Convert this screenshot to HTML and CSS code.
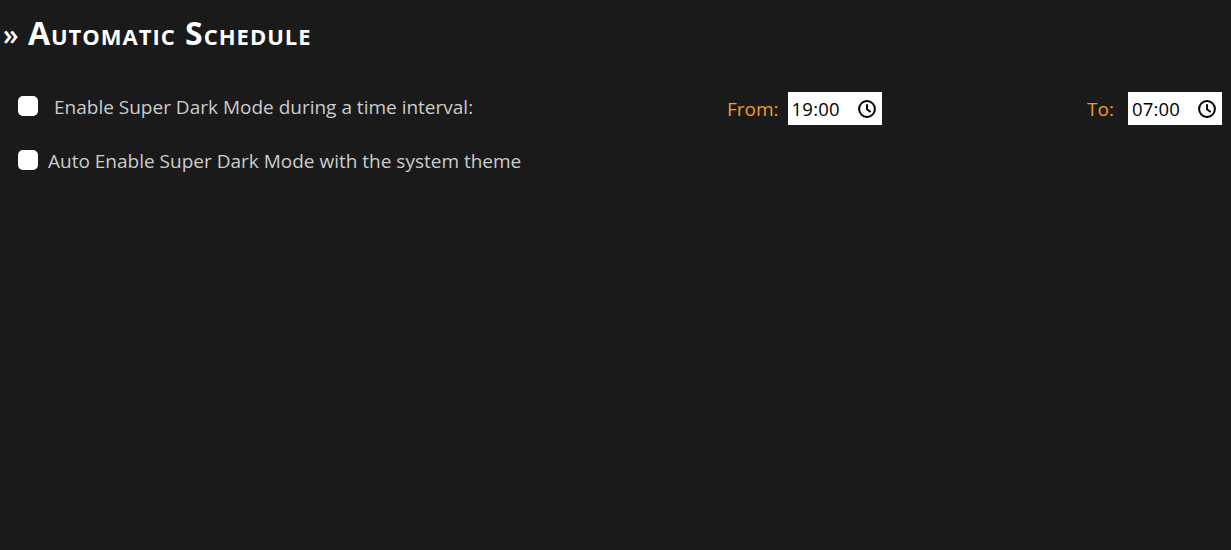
FILE: index.html
```html
<!DOCTYPE html>
<html lang="en">
<head>
    <meta charset="UTF-8">
    <title>Automatic Schedule</title>
    <link rel="stylesheet" href="styles.css">
</head>
<body>
    <h2 class="title"><span class="arrow">»</span> Automatic Schedule</h2>

    <div class="option schedule">
        <label class="check first">
            <input type="checkbox">
            <span>Enable Super Dark Mode during a time interval:</span>
        </label>
        <div class="time from">
            <label for="from">From:</label>
            <div class="time-box">
                <input type="text" id="from" value="19:00">
                <svg class="clock" viewBox="0 0 18 18"><circle cx="9" cy="9" r="7.9"/><path d="M9 4.2V9.2L12.6 12"/></svg>
            </div>
        </div>
        <div class="time to">
            <label for="to">To:</label>
            <div class="time-box">
                <input type="text" id="to" value="07:00">
                <svg class="clock" viewBox="0 0 18 18"><circle cx="9" cy="9" r="7.9"/><path d="M9 4.2V9.2L12.6 12"/></svg>
            </div>
        </div>
    </div>

    <div class="option">
        <label class="check">
            <input type="checkbox">
            <span>Auto Enable Super Dark Mode with the system theme</span>
        </label>
    </div>
</body>
</html>
```

FILE: styles.css
```css
body {
    margin: 0;
    height: 550px;
    overflow: hidden;
    background-color: #1a1a1a;
    color: #cccccc;
    font-family: "Open Sans", "Noto Sans", sans-serif;
    font-size: 19px;
}

.title {
    margin: 0;
    padding: 14px 0 0 3px;
    height: 76px;
    box-sizing: border-box;
    color: #ffffff;
    font-size: 32px;
    font-weight: 700;
    font-variant: small-caps;
    letter-spacing: 1px;
    line-height: 38px;
}

.arrow {
    font-size: 28px;
    font-weight: 600;
    letter-spacing: 0;
}

.option {
    display: flex;
    align-items: center;
    padding-left: 18px;
    height: 32px;
}

.schedule {
    height: 33px;
    margin-top: 16px;
    margin-bottom: 19px;
}

.check {
    display: flex;
    align-items: center;
    gap: 10px;
    width: 709px;
}

.check span {
    padding-top: 2px;
}

.check.first {
    gap: 16px;
    margin-bottom: 5px;
}

.check input {
    appearance: none;
    margin: 0;
    width: 20px;
    height: 20px;
    background-color: #ffffff;
    border-radius: 5px;
}

.time {
    display: flex;
    align-items: center;
    color: #f39c1f;
}

.from {
    width: 360px;
    gap: 9px;
}

.to {
    gap: 14px;
}

.time-box {
    display: flex;
    align-items: center;
    box-sizing: border-box;
    width: 94px;
    height: 33px;
    padding: 0 6px 0 4px;
    background-color: #ffffff;
}

.time-box input {
    flex: 1;
    min-width: 0;
    padding: 0;
    border: 0;
    outline: 0;
    background: none;
    color: #000000;
    font-family: inherit;
    font-size: 18.5px;
    letter-spacing: 0.2px;
}

.clock {
    width: 18px;
    height: 18px;
    fill: none;
    stroke: #000000;
    stroke-width: 2;
}
```
